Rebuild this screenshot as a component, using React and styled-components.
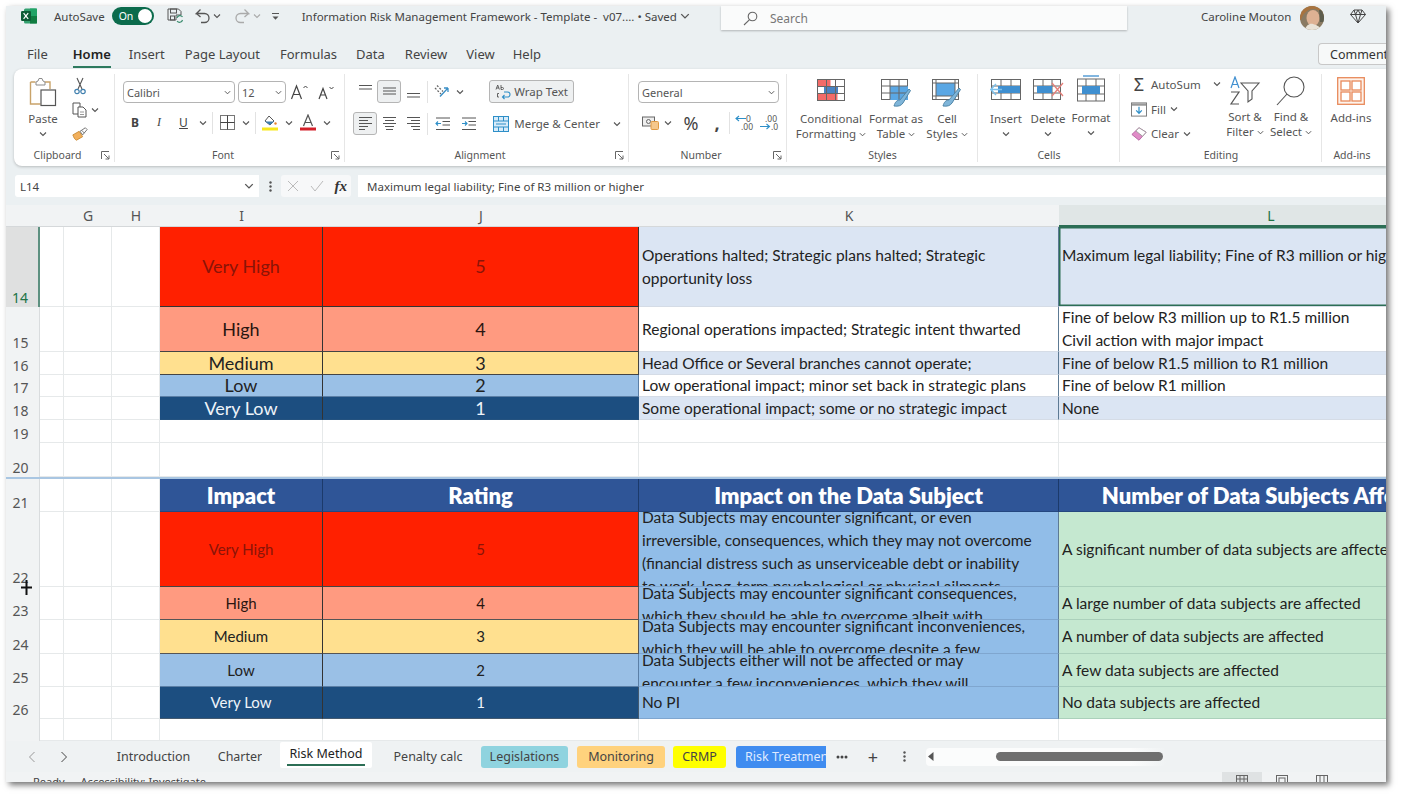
import styled, { createGlobalStyle } from "styled-components";

const GlobalStyle = createGlobalStyle`
  html, body {
    margin: 0;
    padding: 0;
    background: #ffffff;
    overflow: hidden;
  }
  * { box-sizing: border-box; }
`;

const uiFont = `"Noto Sans", "Open Sans", sans-serif`;
const cellFont = `Lato, "Open Sans", sans-serif`;

const Page = styled.div`
  width: 1404px;
  height: 801px;
  padding: 6px 18px 19px 6px;
`;

const Window = styled.div`
  width: 1380px;
  height: 776px;
  background: #ebf0f2;
  box-shadow: 3px 3px 6px rgba(0, 0, 0, 0.55);
  overflow: hidden;
  display: flex;
  flex-direction: column;
  font-family: ${uiFont};
  color: #444;
`;

/* title bar */
const TitleBar = styled.div`
  height: 29px;
  display: flex;
  align-items: flex-start;
  flex-shrink: 0;
`;

const TitleItem = styled.div`
  display: flex;
  align-items: center;
  height: 20px;
  margin-left: ${(p) => p.$ml || 0}px;
  font-size: ${(p) => p.$size || 11.5}px;
  white-space: nowrap;
`;

const Toggle = styled.div`
  width: 42px;
  height: 18px;
  border-radius: 9px;
  background: #0b6b4c;
  color: #fff;
  font-size: 10.5px;
  display: flex;
  align-items: center;
  justify-content: space-between;
  padding: 0 2px 0 7px;
  &::after {
    content: "";
    width: 14px;
    height: 14px;
    border-radius: 50%;
    background: #fff;
  }
`;

const SearchBox = styled.div`
  width: 406px;
  height: 24px;
  margin-left: 31px;
  background: #fafbfb;
  box-shadow: 0 1px 2px rgba(0, 0, 0, 0.25);
  display: flex;
  align-items: center;
  padding-left: 22px;
  gap: 12px;
  font-size: 12px;
  color: #777;
`;

/* menu tabs */
const MenuBar = styled.div`
  height: 34px;
  display: flex;
  flex-shrink: 0;
  padding-left: 21px;
`;

const MenuTab = styled.div`
  margin-right: ${(p) => p.$mr}px;
  height: 25px;
  margin-top: 8px;
  font-size: 13px;
  line-height: 22px;
  color: ${(p) => (p.$active ? "#222" : "#444")};
  font-weight: ${(p) => (p.$active ? 600 : 400)};
  border-bottom: ${(p) => (p.$active ? "2.5px solid #2d7a5f" : "none")};
  white-space: nowrap;
`;

const CommentsButton = styled.div`
  margin-left: auto;
  margin-top: 8px;
  width: 68px;
  height: 22px;
  flex-shrink: 0;
  background: #f7f9f9;
  border: 1px solid #c8c8c8;
  border-right: none;
  border-radius: 4px 0 0 4px;
  display: flex;
  align-items: center;
  padding-left: 8px;
  gap: 3px;
  font-size: 12.5px;
  overflow: hidden;
  color: #333;
`;

/* ribbon */
const Ribbon = styled.div`
  height: 97px;
  margin-left: 8px;
  background: #fff;
  border-radius: 8px 0 0 8px;
  box-shadow: 0 1px 3px rgba(0, 0, 0, 0.22);
  display: flex;
  flex-shrink: 0;
`;

const Group = styled.div`
  width: ${(p) => p.$w}px;
  flex-shrink: 0;
  display: flex;
  flex-direction: column;
  position: relative;
  &::after {
    content: "";
    position: absolute;
    right: 0;
    top: 5px;
    bottom: 4px;
    width: 1px;
    background: ${(p) => (p.$noLine ? "transparent" : "#e6e6e6")};
  }
`;

const GroupBody = styled.div`
  height: 77px;
  display: flex;
  padding-left: ${(p) => p.$pl || 0}px;
  padding-top: ${(p) => p.$pt ?? 0}px;
`;

const GroupFooter = styled.div`
  height: 20px;
  display: flex;
  align-items: center;
  font-size: 10.5px;
  color: #555;
  padding-bottom: 2px;
`;

const FooterLabel = styled.div`
  flex: 1;
  text-align: center;
  white-space: nowrap;
`;

const Launcher = styled.div`
  width: 14px;
  display: flex;
  justify-content: flex-start;
`;

const Stack = styled.div`
  display: flex;
  flex-direction: column;
  width: ${(p) => (p.$w ? `${p.$w}px` : "auto")};
`;

const ToolRow = styled.div`
  display: flex;
  align-items: center;
  height: ${(p) => p.$h || 24}px;
  margin-top: ${(p) => p.$mt || 0}px;
  margin-left: ${(p) => p.$ml || 0}px;
`;

const Slot = styled.div`
  width: ${(p) => p.$w || 24}px;
  height: 23px;
  flex-shrink: 0;
  display: flex;
  align-items: center;
  justify-content: center;
  font-size: ${(p) => p.$size || 12}px;
  font-weight: ${(p) => p.$weight || 400};
  font-style: ${(p) => p.$italic ? "italic" : "normal"};
  font-family: ${(p) => p.$serif ? `"Liberation Serif", serif` : "inherit"};
  text-decoration: ${(p) => p.$under ? "underline" : "none"};
  color: #444;
  border-radius: 3px;
  background: ${(p) => (p.$on ? "#eef0f1" : "transparent")};
  border: ${(p) => (p.$on ? "1px solid #b5b5b5" : "none")};
`;

const VLine = styled.div`
  width: 1px;
  height: 22px;
  background: #e2e2e2;
  margin: 0 ${(p) => p.$m ?? 2}px;
  flex-shrink: 0;
`;

const SelectBox = styled.div`
  width: ${(p) => p.$w}px;
  height: 22px;
  border: 1px solid #b4b4b4;
  border-radius: 4px;
  display: flex;
  align-items: center;
  justify-content: space-between;
  padding: 0 3px;
  font-size: 11px;
  color: #555;
  flex-shrink: 0;
  margin-right: ${(p) => p.$mr || 0}px;
`;

const WrapButton = styled.div`
  width: 85px;
  height: 23px;
  background: #eef0f1;
  border: 1px solid #b5b5b5;
  border-radius: 3px;
  display: flex;
  align-items: center;
  padding-left: 5px;
  gap: 3px;
  font-size: 11.5px;
  color: #555;
  white-space: nowrap;
`;

const SmallAction = styled.div`
  display: flex;
  align-items: center;
  gap: ${(p) => p.$gap ?? 4}px;
  height: 25px;
  font-size: 11.5px;
  color: #555;
  white-space: nowrap;
`;

const LargeButton = styled.div`
  width: ${(p) => p.$w}px;
  flex-shrink: 0;
  display: flex;
  flex-direction: column;
  align-items: center;
  padding-top: ${(p) => p.$pt ?? 8}px;
  font-size: 11.5px;
  line-height: 15.5px;
  color: #555;
  text-align: center;
  white-space: nowrap;
`;

const IconBox = styled.div`
  height: ${(p) => p.$h || 32}px;
  display: flex;
  align-items: flex-start;
  justify-content: center;
`;

const ChevLine = styled.div`
  height: 15px;
  display: flex;
  align-items: center;
  justify-content: center;
  gap: 3px;
`;

/* formula bar */
const FormulaBar = styled.div`
  height: 22px;
  margin: 9px 0 0 9px;
  display: flex;
  align-items: stretch;
  flex-shrink: 0;
`;

const NameBox = styled.div`
  width: 244px;
  background: #fff;
  border-radius: 3px 0 0 3px;
  display: flex;
  align-items: center;
  justify-content: space-between;
  padding: 0 5px;
  font-size: 11.5px;
  color: #444;
`;

const Kebab = styled.div`
  width: 22px;
  display: flex;
  align-items: center;
  justify-content: center;
`;

const FxBox = styled.div`
  width: 70px;
  background: #f7f8f9;
  border-radius: 3px;
  display: flex;
  align-items: center;
  justify-content: space-between;
  padding: 0 4px 0 6px;
  margin-right: 7px;
`;

const FxLabel = styled.span`
  font-family: "Liberation Serif", serif;
  font-style: italic;
  font-weight: 700;
  font-size: 15px;
  color: #333;
`;

const FormulaInput = styled.div`
  flex: 1;
  background: #fff;
  display: flex;
  align-items: center;
  padding-left: 9px;
  font-size: 11.5px;
  color: #444;
`;

/* sheet */
const Sheet = styled.div`
  margin-top: 8px;
  height: 536px;
  flex-shrink: 0;
  overflow: hidden;
  position: relative;
  background: #fff;
`;

const columns = "34px 24px 48px 48px 163px 316px 420px 424px";

const SheetRow = styled.div`
  display: grid;
  grid-template-columns: ${columns};
  height: ${(p) => p.$h}px;
  width: 1477px;
  border-top: ${(p) => (p.$topRule ? "2px solid #a9c6e2" : "none")};
`;

const ColHead = styled.div`
  background: ${(p) => (p.$selected ? "#e0e6e6" : "#f1f3f4")};
  color: ${(p) => (p.$selected ? "#217346" : "#555")};
  border-bottom: ${(p) => (p.$selected ? "2px solid #2c6e55" : "1px solid #d5d8da")};
  font-size: 14px;
  display: flex;
  align-items: center;
  justify-content: center;
`;

const RowHead = styled.div`
  position: relative;
  background: ${(p) => (p.$selected ? "#dfe0e0" : "#f1f3f4")};
  color: ${(p) => (p.$selected ? "#217346" : "#555")};
  border-right: ${(p) => (p.$selected ? "2px solid #5d9080" : "1px solid #d9dcde")};
  font-size: 14px;
  line-height: 18px;
  display: flex;
  align-items: flex-end;
  justify-content: center;
  padding-right: 4px;
`;

const ResizeCursor = styled.svg`
  position: absolute;
  left: 14px;
  bottom: -9px;
  z-index: 3;
`;

const Cell = styled.div`
  background: ${(p) => p.$bg || "#fff"};
  color: ${(p) => p.$color || "#222"};
  font-family: ${cellFont};
  font-size: ${(p) => p.$size || 15}px;
  font-weight: ${(p) => (p.$bold ? 800 : 400)};
  line-height: 23px;
  border-right: 1px solid ${(p) => p.$right || "#e6e9ea"};
  border-bottom: 1px solid ${(p) => p.$bottom || "#e6e9ea"};
  overflow: hidden;
  white-space: nowrap;
  display: flex;
  align-items: ${(p) => (p.$top ? "flex-start" : "center")};
  justify-content: ${(p) => (p.$center ? "center" : "flex-start")};
  padding-left: ${(p) => (p.$center ? 0 : 3)}px;
  box-shadow: ${(p) => (p.$selected ? "inset 0 0 0 1.5px #2c6e55" : "none")};
`;

const ClippedText = styled.div`
  margin-top: ${(p) => p.$shift || 0}px;
`;

/* sheet tabs */
const TabsBar = styled.div`
  height: 31px;
  flex-shrink: 0;
  background: #eff2f3;
  display: flex;
  align-items: center;
  padding-left: 22px;
  font-size: 12.5px;
`;

const NavSlot = styled.div`
  width: ${(p) => p.$w}px;
  display: flex;
  justify-content: flex-start;
  flex-shrink: 0;
  color: ${(p) => p.$color || "#555"};
`;

const SheetTab = styled.div`
  width: ${(p) => p.$w}px;
  margin-right: ${(p) => p.$mr || 0}px;
  height: ${(p) => (p.$active ? 26 : 22)}px;
  background: ${(p) => p.$bg || "transparent"};
  color: ${(p) => p.$color || "#444"};
  border-radius: ${(p) => p.$radius ?? 3}px;
  display: flex;
  align-items: center;
  justify-content: center;
  white-space: nowrap;
  overflow: hidden;
  flex-shrink: 0;
  position: relative;
  margin-top: ${(p) => (p.$active ? -4 : 0)}px;
  &::after {
    content: "";
    display: ${(p) => (p.$active ? "block" : "none")};
    position: absolute;
    left: 7px;
    right: 7px;
    bottom: 2px;
    height: 2px;
    background: #2c6e55;
  }
`;

const TabText = styled.span`
  padding-bottom: ${(p) => (p.$active ? 3 : 0)}px;
  color: inherit;
`;

const TabTool = styled.div`
  width: ${(p) => p.$w}px;
  flex-shrink: 0;
  display: flex;
  align-items: center;
  justify-content: center;
  font-size: 18px;
  color: #444;
`;

const ScrollTrack = styled.div`
  width: 240px;
  height: 18px;
  margin-left: 6px;
  flex-shrink: 0;
  background: linear-gradient(90deg, #fbfcfc 85%, #eff2f3);
  border-radius: 4px;
  display: flex;
  align-items: center;
  padding-left: 2px;
`;

const ScrollThumb = styled.div`
  width: 167px;
  height: 9px;
  margin-left: 62px;
  background: #6f6f6f;
  border-radius: 5px;
  flex-shrink: 0;
`;

const StatusBar = styled.div`
  height: 10px;
  flex: 1;
  display: flex;
  overflow: hidden;
  padding-left: 27px;
  font-size: 11px;
  line-height: 20px;
  color: #444;
  gap: 16px;
  white-space: nowrap;
  background: #f1f3f4;
`;

const StatusViews = styled.div`
  margin-left: auto;
  display: flex;
  margin-right: 44px;
`;

const ViewButton = styled.div`
  width: 40px;
  height: 10px;
  padding-top: 3px;
  display: flex;
  justify-content: center;
  background: ${(p) => (p.$on ? "#dfe2e3" : "transparent")};
`;

/* icons */
const Chev = ({ s = 8, c = "#555" }) => (
  <svg width={s} height={s} viewBox="0 0 8 8" fill="none">
    <path d="M1 2.5 4 5.5 7 2.5" stroke={c} strokeWidth="1.1" />
  </svg>
);

const ExcelLogo = () => (
  <svg width="16" height="16" viewBox="0 0 16 16">
    <rect x="3" y="0.5" width="13" height="15" rx="1.5" fill="#33a06f" />
    <rect x="9" y="0.5" width="7" height="7.5" fill="#21a366" />
    <rect x="9" y="8" width="7" height="7.5" fill="#107c41" />
    <rect x="0" y="3" width="10" height="10" rx="1.2" fill="#0e5c36" />
    <path d="M2.6 5.2 7.2 10.8M7.2 5.2 2.6 10.8" stroke="#fff" strokeWidth="1.2" />
  </svg>
);

const SaveIcon = () => (
  <svg width="17" height="16" viewBox="0 0 17 16" fill="none" stroke="#555">
    <path d="M1 1h10.5L14 3.5V7H9v5H1z" />
    <rect x="3.5" y="1" width="6" height="4" />
    <rect x="3.5" y="8" width="4" height="4" />
    <path d="M10 10a3 3 0 0 1 5.5-1M15.5 12a3 3 0 0 1-5.4 1" stroke="#3a8c6e" strokeWidth="1.2" />
  </svg>
);

const UndoIcon = ({ c = "#555", flip }) => (
  <svg width="16" height="16" viewBox="0 0 16 16" fill="none" stroke={c} strokeWidth="1.3" style={flip ? { transform: "scaleX(-1)" } : undefined}>
    <path d="M5.5 1.5 1.5 5.5h8a4.2 4.2 0 0 1 0 9H6" />
    <path d="M1.5 5.5 5.5 9" />
  </svg>
);

const QuickIcon = () => (
  <svg width="9" height="9" viewBox="0 0 9 9" fill="none" stroke="#555">
    <path d="M1 1.5h7" />
    <path d="M1.5 4.5h6L4.5 7.8z" fill="#555" stroke="none" />
  </svg>
);

const SearchIcon = () => (
  <svg width="15" height="15" viewBox="0 0 15 15" fill="none" stroke="#666" strokeWidth="1.1">
    <circle cx="9.5" cy="5.5" r="4.3" />
    <path d="M6.3 8.8 1 14" />
  </svg>
);

const Avatar = () => (
  <svg width="24" height="24" viewBox="0 0 24 24">
    <defs>
      <clipPath id="face"><circle cx="12" cy="12" r="12" /></clipPath>
    </defs>
    <g clipPath="url(#face)">
      <rect width="24" height="24" fill="#8a7a62" />
      <path d="M0 0h24v10c-3-5-6-7-11-7S3 7 1 14L0 14z" fill="#a8733f" />
      <ellipse cx="13" cy="12" rx="6.5" ry="8" fill="#ddb193" />
      <path d="M5 24c1-5 5-7 8-6s7 2 8 6z" fill="#e9e3d8" />
      <path d="M19 4h5v12h-4z" fill="#5d5d4d" />
    </g>
  </svg>
);

const Diamond = () => (
  <svg width="16" height="15" viewBox="0 0 16 15" fill="none" stroke="#444" strokeWidth="1">
    <path d="M4 1h8l3.5 4.5L8 14 .5 5.5zM.5 5.5h15M5.5 5.5 8 14l2.5-8.500M4 1l1.500 4.500L8 1l2.500 4.500L12 1" />
  </svg>
);

const CommentIcon = () => (
  <svg width="13" height="12" viewBox="0 0 13 12" fill="none" stroke="#444">
    <path d="M1 1h11v7.500H5L2.500 11V8.500H1z" />
  </svg>
);

const PasteIcon = () => (
  <svg width="30" height="30" viewBox="0 0 30 30" fill="none">
    <path d="M2.500 5h5M17 5h5v7" stroke="#c9a36a" strokeWidth="1.400" />
    <path d="M2.500 5v22h10" stroke="#c9a36a" strokeWidth="1.400" />
    <path d="M8 5l2-1 1-2.500h3L15 4l2 1v3H8z" fill="#fff" stroke="#8b8b8b" />
    <rect x="13" y="13" width="14.500" height="15.500" fill="#fff" stroke="#555" strokeWidth="1.200" />
  </svg>
);

const CutIcon = () => (
  <svg width="14" height="18" viewBox="0 0 14 18" fill="none">
    <path d="M4 1 9 12M10 1 5 12" stroke="#555" strokeWidth="1.100" />
    <circle cx="4" cy="14.500" r="2.200" stroke="#3f7fae" strokeWidth="1.200" />
    <circle cx="10" cy="14.500" r="2.200" stroke="#3f7fae" strokeWidth="1.200" />
  </svg>
);

const CopyIcon = () => (
  <svg width="16" height="16" viewBox="0 0 16 16" fill="none" stroke="#555">
    <path d="M1 1h7v11H1z" />
    <path d="M6 5h5l3 3v7H6z" fill="#fff" />
    <path d="M8 10h4M8 12.500h4" stroke="#999" />
  </svg>
);

const PainterIcon = () => (
  <svg width="18" height="16" viewBox="0 0 18 16" fill="none">
    <path d="M1 9l7-4 4 6-7 4c-2-1-3-3-4-6z" fill="#f2b05c" stroke="#c98a33" />
    <path d="M9 5l6-4 2 2-5 6z" fill="#fff" stroke="#666" />
    <path d="M11 4l3 3" stroke="#666" />
  </svg>
);

const Launch = () => (
  <svg width="9" height="9" viewBox="0 0 9 9" fill="none" stroke="#666">
    <path d="M.5 8V.5H8" />
    <path d="M3 3l5 5M8 4.500V8H4.500" />
  </svg>
);

const GrowA = ({ up }) => (
  <svg width="20" height="16" viewBox="0 0 20 16" fill="none" stroke="#444">
    <path d={up ? "M1.500 15 6.500 2l5 13M3.500 10.500h6" : "M3 15 7 4.500l4 10.500M4.500 11h5"} strokeWidth="1.200" />
    <path d={up ? "M13.500 4 15.500 2l2 2" : "M13.500 3 15.500 5l2-2"} />
  </svg>
);

const BordersIcon = () => (
  <svg width="15" height="15" viewBox="0 0 15 15" fill="none" stroke="#777">
    <rect x=".5" y=".5" width="14" height="14" />
    <path d="M7.500 .5v14M.5 7.500h14" stroke="#444" />
  </svg>
);

const FillIcon = () => (
  <svg width="16" height="17" viewBox="0 0 16 17" fill="none">
    <path d="M3 7l4-5 5 5-4 4z" stroke="#555" fill="#fff" />
    <path d="M3 7.500h9L8 11z" fill="#3f7fae" />
    <circle cx="13.500" cy="9.500" r="1.200" fill="#e8842c" />
    <rect y="13.500" width="16" height="3" fill="#f7e81a" />
  </svg>
);

const FontColorIcon = () => (
  <svg width="16" height="17" viewBox="0 0 16 17" fill="none">
    <path d="M3.500 12 8 1l4.500 11M5 8.500h6" stroke="#555" strokeWidth="1.200" />
    <rect y="13.500" width="16" height="3" fill="#d3202a" />
  </svg>
);

const Lines = ({ v }) => {
  const rows = {
    top: ["M2 2.500h13", "M2 6h13", ""],
    middle: ["M2 5h13", "M2 8h13", "M2 11h13"],
    bottom: ["", "M2 10.500h13", "M2 14h13"],
    left: ["M2 2.500h13", "M2 5.500h9", "M2 8.500h13", "M2 11.500h9", "M2 14.500h6"],
    center: ["M2 2.500h13", "M4 5.500h9", "M2 8.500h13", "M4 11.500h9", "M5 14.500h7"],
    right: ["M2 2.500h13", "M6 5.500h9", "M2 8.500h13", "M6 11.500h9", "M8 14.500h7"],
  }[v];
  return (
    <svg width="17" height="17" viewBox="0 0 17 17" fill="none" stroke="#555">
      <path d={rows.join(" ")} />
    </svg>
  );
};

const OrientIcon = () => (
  <svg width="16" height="15" viewBox="0 0 16 15" fill="none">
    <path d="M1 4l6 6M3 1.500l6 6" stroke="#666" strokeWidth="1.300" strokeDasharray="2 1.500" />
    <path d="M6 12.500 14 4M14 4h-4M14 4v4" stroke="#3a8fc6" strokeWidth="1.300" />
  </svg>
);

const IndentIcon = ({ out }) => (
  <svg width="16" height="14" viewBox="0 0 16 14" fill="none">
    <path d="M1 1h14M7.500 4.500H15M7.500 8h7.500M1 12.500h14" stroke="#555" />
    <path d={out ? "M6 6.500H1M3 4.500l-2 2 2 2" : "M1 6.500h5M4 4.500l2 2-2 2"} stroke="#2e8fc8" strokeWidth="1.100" />
  </svg>
);

const WrapIcon = () => (
  <svg width="16" height="16" viewBox="0 0 16 16" fill="none">
    <path d="M9 8h3.500a2.300 2.300 0 0 1 0 5H8M9.500 11 7.500 13l2 2" stroke="#2e8fc8" strokeWidth="1.100" />
    <path d="M1 5.500 2.700 1l1.700 4.500M1.600 4h2.200M6 1v4.500M6 3.500h1.500a1 1 0 0 1 0 2H6M4 9.500H2.500V13H4" stroke="#555" strokeWidth=".9" />
  </svg>
);

const MergeIcon = () => (
  <svg width="16" height="16" viewBox="0 0 16 16" fill="none">
    <rect x=".5" y=".5" width="15" height="15" fill="#d8ecfa" stroke="#2e8fc8" />
    <path d="M.5 5h15M.5 11h15M5.500 .5V5M10.500 .5V5M5.500 11v4.500M10.500 11v4.500M3 8h10" stroke="#2e8fc8" />
  </svg>
);

const AccountingIcon = () => (
  <svg width="17" height="15" viewBox="0 0 17 15" fill="none">
    <rect x=".5" y="2" width="12" height="9" fill="#eee" stroke="#666" />
    <circle cx="6.500" cy="6.500" r="2" stroke="#666" />
    <rect x="9" y="6.500" width="7.500" height="8" rx="1" fill="#f5c78c" stroke="#e09a44" />
  </svg>
);

const DecimalIcon = ({ more }) => (
  <svg width="20" height="17" viewBox="0 0 20 17" fill="none">
    {more ? (
      <>
        <path d="M19 4.500H9M12 2 9 4.500 12 7" stroke="#2e8fc8" strokeWidth="1.100" transform="translate(-8 0)" />
        <text x="11" y="7.500" fontSize="8.500" fill="#555" fontFamily="Noto Sans">0</text>
        <text x="6" y="16" fontSize="8.500" fill="#555" fontFamily="Noto Sans">.00</text>
      </>
    ) : (
      <>
        <text x="6" y="7.500" fontSize="8.500" fill="#555" fontFamily="Noto Sans">.00</text>
        <path d="M1 12.500h9M7.500 10l3 2.500-3 2.500" stroke="#2e8fc8" strokeWidth="1.100" />
        <text x="12" y="16" fontSize="8.500" fill="#555" fontFamily="Noto Sans">.0</text>
      </>
    )}
  </svg>
);

const GridBase = ({ children, w = 28, h = 22 }) => (
  <svg width={w} height={h + 6} viewBox={`0 0 ${w} ${h + 6}`} fill="none">
    {children}
  </svg>
);

const CondFormatIcon = () => (
  <GridBase>
    <rect x=".5" y=".5" width="27" height="21" fill="#fff" stroke="#666" />
    <path d="M.5 .5h13v7h-13zM.5 14h20v7.500H.5z" fill="#f36b68" />
    <path d="M7 7.500h14V14H7z" fill="#4a83c2" />
    <path d="M9.500 .5v21M18.500 .5v21M.5 7.500h27M.5 14.500h27" stroke="#666" />
    <rect x=".5" y=".5" width="27" height="21" stroke="#666" />
  </GridBase>
);

const TableIcon = () => (
  <svg width="30" height="28" viewBox="0 0 30 28" fill="none">
    <rect x=".5" y=".5" width="26" height="20" fill="#fff" stroke="#666" />
    <path d="M9 7h18v14H9z" fill="#5aa7e4" />
    <path d="M9 .5v20M18 .5v20M.5 7h26M.5 14h26" stroke="#666" />
    <path d="M13 27c1-4 3-6 6-6l9-11 1.500 1.500L22 24c-2 3-5 3.500-9 3z" fill="#7fb5d9" stroke="#4f86a8" />
  </svg>
);

const CellStylesIcon = () => (
  <svg width="30" height="28" viewBox="0 0 30 28" fill="none">
    <rect x=".5" y=".5" width="26" height="20" fill="#fff" stroke="#666" />
    <rect x="4" y="4" width="19" height="13" fill="#5aa7e4" />
    <path d="M.5 4h26M.5 17h26M4 .5v20M23 .5v20" stroke="#666" />
    <path d="M11 27c1-4 3-6 6-6l10-12 1.500 1.500L20 24c-2 3-5 3.500-9 3z" fill="#7fb5d9" stroke="#4f86a8" />
  </svg>
);

const InsertCellsIcon = () => (
  <svg width="32" height="24" viewBox="0 0 32 24" fill="none">
    <rect x="1.500" y="1.500" width="29" height="20" fill="#fff" stroke="#666" />
    <path d="M11 1.500v20M21 1.500v20M1.500 8h29M1.500 15h29" stroke="#666" />
    <rect x="8" y="8" width="22" height="7" fill="#3f8fd0" />
    <path d="M12 11.500H1M6 6 .8 11.500 6 17" stroke="#7cc0ea" strokeWidth="1.500" />
  </svg>
);

const DeleteCellsIcon = () => (
  <svg width="32" height="24" viewBox="0 0 32 24" fill="none">
    <rect x="1.500" y="1.500" width="27" height="20" fill="#fff" stroke="#666" />
    <path d="M11 1.500v20M20 1.500v20M1.500 8h27M1.500 15h27" stroke="#666" />
    <rect x="5" y="8" width="15" height="7" fill="#3f8fd0" />
    <path d="M20 5l11 13M31 5 20 18" stroke="#e4807a" strokeWidth="1.300" />
  </svg>
);

const FormatCellsIcon = () => (
  <svg width="28" height="27" viewBox="0 0 28 27" fill="none">
    <path d="M6 1h16" stroke="#3f8fd0" strokeWidth="1.300" />
    <rect x=".5" y="4" width="27" height="22" fill="#fff" stroke="#666" />
    <path d="M9 4v22M19 4v22M.5 11h27M.5 19h27" stroke="#666" />
    <rect x="9" y="11" width="10" height="8" fill="#3f8fd0" />
    <rect x="5" y="11" width="18" height="8" fill="#3f8fd0" />
  </svg>
);

const FillDownIcon = () => (
  <svg width="17" height="15" viewBox="0 0 17 15" fill="none">
    <rect x=".5" y=".5" width="16" height="14" fill="#fff" stroke="#777" />
    <rect x="1" y="1" width="15" height="2.500" fill="#999" />
    <path d="M8.500 4.500V11M5.500 8.500l3 3 3-3" stroke="#2e8fc8" strokeWidth="1.300" />
  </svg>
);

const EraserIcon = () => (
  <svg width="18" height="16" viewBox="0 0 18 16" fill="none">
    <path d="M1 8.500 9 1l8 5-8 9z" fill="#e08cc7" stroke="#b562a0" />
    <path d="M9 1l8 5-4 4.500L5.500 4.500z" fill="#fff" stroke="#999" />
  </svg>
);

const SortIcon = () => (
  <svg width="32" height="30" viewBox="0 0 32 30" fill="none">
    <path d="M2 12 6 1l4 11M3.500 8.500h5" stroke="#3f8fd0" strokeWidth="1.200" />
    <path d="M2 16h8L2 28h8" stroke="#555" strokeWidth="1.200" />
    <path d="M12 7h18l-7 8v8l-4 3V15z" fill="#fff" stroke="#555" strokeWidth="1.100" />
  </svg>
);

const FindIcon = () => (
  <svg width="30" height="30" viewBox="0 0 30 30" fill="none" stroke="#555" strokeWidth="1.100">
    <circle cx="18" cy="11" r="10" />
    <path d="M11 18 1 29" />
  </svg>
);

const AddInsIcon = () => (
  <svg width="28" height="28" viewBox="0 0 28 28" fill="none" stroke="#e8895a" strokeWidth="1.300">
    <rect x=".7" y=".7" width="26.600" height="26.600" fill="#fdf3ec" />
    <rect x="4" y="4" width="9" height="9" fill="#fff" />
    <rect x="15" y="4" width="9" height="9" fill="#fff" />
    <rect x="4" y="15" width="9" height="9" fill="#fff" />
    <rect x="15" y="15" width="9" height="9" fill="#fff" />
  </svg>
);

const ViewGlyph = ({ kind }) => (
  <svg width="12" height="12" viewBox="0 0 12 12" fill="none" stroke="#666">
    <rect x=".5" y=".5" width="11" height="11" />
    {kind === "normal" && <path d="M4 .5v11M8 .5v11M.5 4h11" />}
    {kind === "page" && <rect x="3" y="3" width="6" height="6" />}
    {kind === "break" && <path d="M4 .5v11M8 .5v11" />}
  </svg>
);

/* sheet data */
const RED = "#ff2000";
const SALMON = "#ff9a80";
const YELLOW = "#ffe08f";
const LOW = "#9ac0e6";
const NAVY = "#1c4e80";
const HEAD = "#2f5597";
const PALE = "#dbe5f3";
const KBLUE = "#91bde8";
const GREEN = "#c5e8d0";

const ratingRows = [
  {
    n: 14, h: 80, i: "Very High", j: "5", bg: RED, color: "#8a1408", size: 18,
    k: ["Operations halted; Strategic plans halted; Strategic", "opportunity loss"],
    l: ["Maximum legal liability; Fine of R3 million or higher"], kBg: PALE, lBg: PALE, line: "#333", selected: true,
  },
  {
    n: 15, h: 45, i: "High", j: "4", bg: SALMON, color: "#2a1510", size: 18,
    k: ["Regional operations impacted; Strategic intent thwarted"],
    l: ["Fine of below R3 million up to R1.5 million", "Civil action with major impact"], kBg: "#fff", lBg: "#fff", line: "#444",
  },
  {
    n: 16, h: 23, i: "Medium", j: "3", bg: YELLOW, color: "#222", size: 18,
    k: ["Head Office or Several branches cannot operate;"],
    l: ["Fine of below R1.5 million to R1 million"], kBg: PALE, lBg: PALE, line: "#444",
  },
  {
    n: 17, h: 22, i: "Low", j: "2", bg: LOW, color: "#222", size: 18,
    k: ["Low operational impact; minor set back in strategic plans"],
    l: ["Fine of below R1 million"], kBg: "#fff", lBg: "#fff", line: "#5b7fa6",
  },
  {
    n: 18, h: 23, i: "Very Low", j: "1", bg: NAVY, color: "#eef4fa", size: 18,
    k: ["Some operational impact; some or no strategic impact"],
    l: ["None"], kBg: PALE, lBg: PALE, line: "#24527f",
  },
];

const subjectRows = [
  {
    n: 22, h: 75, i: "Very High", j: "5", bg: RED, color: "#8a1408", size: 15, shift: -6, cursor: true,
    k: ["Data Subjects may encounter significant, or even", "irreversible, consequences, which they may not overcome", "(financial distress such as unserviceable debt or inability", "to work, long-term psychological or physical ailments"],
    l: ["A significant number of data subjects are affected"], line: "#444",
  },
  {
    n: 23, h: 33, i: "High", j: "4", bg: SALMON, color: "#2a1510", size: 15, shift: -5,
    k: ["Data Subjects may encounter significant consequences,", "which they should be able to overcome albeit with"],
    l: ["A large number of data subjects are affected"], line: "#555",
  },
  {
    n: 24, h: 34, i: "Medium", j: "3", bg: YELLOW, color: "#222", size: 15, shift: -5,
    k: ["Data Subjects may encounter significant inconveniences,", "which they will be able to overcome despite a few"],
    l: ["A number of data subjects are affected"], line: "#555",
  },
  {
    n: 25, h: 33, i: "Low", j: "2", bg: LOW, color: "#222", size: 15, shift: -5,
    k: ["Data Subjects either will not be affected or may", "encounter a few inconveniences, which they will"],
    l: ["A few data subjects are affected"], line: "#5b7fa6",
  },
  {
    n: 26, h: 32, i: "Very Low", j: "1", bg: NAVY, color: "#eef4fa", size: 15,
    k: ["No PI"], l: ["No data subjects are affected"], line: "#445a70",
  },
];

const BlankCells = ({ bottom }) => (
  <>
    <Cell $bottom={bottom} />
    <Cell $bottom={bottom} />
    <Cell $bottom={bottom} />
  </>
);

const DataRow = ({ row, second }) => (
  <SheetRow $h={row.h}>
    <RowHead $selected={row.selected}>
      {row.n}
      {row.cursor && (
        <ResizeCursor width="13" height="17" viewBox="0 0 13 17">
          <path d="M6.500 1v15M1 8.500h11" stroke="#111" strokeWidth="2" />
        </ResizeCursor>
      )}
    </RowHead>
    <BlankCells />
    <Cell $bg={row.bg} $color={row.color} $size={row.size} $center $right="#333" $bottom={row.line}>{row.i}</Cell>
    <Cell $bg={row.bg} $color={row.color} $size={row.size} $center $right={row.line} $bottom={row.line}>{row.j}</Cell>
    <Cell $bg={second ? KBLUE : row.kBg} $top={row.shift !== undefined} $bottom={second ? "#7fa6cf" : "#d5dce6"} $right="#5d7a94" $size={second ? 15.5 : 15.5}>
      <ClippedText $shift={row.shift}>
        {row.k.map((t) => <div key={t}>{t}</div>)}
      </ClippedText>
    </Cell>
    <Cell $bg={second ? GREEN : row.lBg} $bottom={second ? "#abd0bb" : "#d5dce6"} $right="transparent" $selected={row.selected} $top={row.selected} $size={15.5}>
      <ClippedText $shift={row.selected ? 17 : 0}>
        {row.l.map((t) => <div key={t}>{t}</div>)}
      </ClippedText>
    </Cell>
  </SheetRow>
);

const EmptyRow = ({ n, h }) => (
  <SheetRow $h={h}>
    <RowHead>{n}</RowHead>
    <BlankCells />
    <Cell /><Cell /><Cell /><Cell />
  </SheetRow>
);

const Header = ({ children, w }) => <Cell $bg={HEAD} $color="#fff" $size={22} $bold $center $right="#1c3a6b" $bottom="#24477f">{children}</Cell>;

export default function App() {
  return (
    <Page>
      <GlobalStyle />
      <Window>
        <TitleBar>
          <TitleItem $ml={15}><ExcelLogo /></TitleItem>
          <TitleItem $ml={17}>AutoSave</TitleItem>
          <TitleItem $ml={7}><Toggle>On</Toggle></TitleItem>
          <TitleItem $ml={13}><SaveIcon /></TitleItem>
          <TitleItem $ml={11}><UndoIcon /></TitleItem>
          <TitleItem $ml={2}><Chev /></TitleItem>
          <TitleItem $ml={13}><UndoIcon c="#aaa" flip /></TitleItem>
          <TitleItem $ml={3}><Chev c="#aaa" /></TitleItem>
          <TitleItem $ml={10}><QuickIcon /></TitleItem>
          <TitleItem $ml={22}>Information Risk Management Framework - Template -&nbsp; v07.... • Saved&nbsp;<Chev s={10} /></TitleItem>
          <SearchBox><SearchIcon />Search</SearchBox>
          <TitleItem $ml={74}>Caroline Mouton</TitleItem>
          <TitleItem $ml={9} style={{ height: 24 }}><Avatar /></TitleItem>
          <TitleItem $ml={26}><Diamond /></TitleItem>
        </TitleBar>

        <MenuBar>
          <MenuTab $mr={25}>File</MenuTab>
          <MenuTab $mr={18} $active>Home</MenuTab>
          <MenuTab $mr={20}>Insert</MenuTab>
          <MenuTab $mr={20}>Page Layout</MenuTab>
          <MenuTab $mr={19}>Formulas</MenuTab>
          <MenuTab $mr={20}>Data</MenuTab>
          <MenuTab $mr={19}>Review</MenuTab>
          <MenuTab $mr={18}>View</MenuTab>
          <MenuTab $mr={0}>Help</MenuTab>
          <CommentsButton><CommentIcon />Comments</CommentsButton>
        </MenuBar>

        <Ribbon>
          <Group $w={101}>
            <GroupBody>
              <LargeButton $w={58} $pt={8}>
                <IconBox $h={34}><PasteIcon /></IconBox>
                Paste
                <ChevLine><Chev /></ChevLine>
              </LargeButton>
              <Stack>
                <ToolRow $h={23} $mt={5}><Slot $w={16}><CutIcon /></Slot></ToolRow>
                <ToolRow $h={25}><Slot $w={16}><CopyIcon /></Slot><Slot $w={14}><Chev /></Slot></ToolRow>
                <ToolRow $h={23}><Slot $w={16}><PainterIcon /></Slot></ToolRow>
              </Stack>
            </GroupBody>
            <GroupFooter><FooterLabel>Clipboard</FooterLabel><Launcher><Launch /></Launcher></GroupFooter>
          </Group>

          <Group $w={230}>
            <GroupBody $pl={8} $pt={12}>
              <Stack>
                <ToolRow $h={22}>
                  <SelectBox $w={112} $mr={3}>Calibri<Chev s={7} /></SelectBox>
                  <SelectBox $w={48}>12<Chev s={7} /></SelectBox>
                  <Slot $w={27}><GrowA up /></Slot>
                  <Slot $w={25}><GrowA /></Slot>
                </ToolRow>
                <ToolRow $h={23} $mt={8}>
                  <Slot $size={12} $weight={700}>B</Slot>
                  <Slot $size={12} $italic $serif>I</Slot>
                  <Slot $w={25} $size={12} $under>U</Slot>
                  <Slot $w={14}><Chev /></Slot>
                  <VLine $m={2} />
                  <Slot $w={24}><BordersIcon /></Slot>
                  <Slot $w={14}><Chev /></Slot>
                  <VLine $m={2} />
                  <Slot $w={24}><FillIcon /></Slot>
                  <Slot $w={14}><Chev /></Slot>
                  <Slot $w={24}><FontColorIcon /></Slot>
                  <Slot $w={14}><Chev /></Slot>
                </ToolRow>
              </Stack>
            </GroupBody>
            <GroupFooter><FooterLabel>Font</FooterLabel><Launcher><Launch /></Launcher></GroupFooter>
          </Group>

          <Group $w={284}>
            <GroupBody $pl={8} $pt={11}>
              <Stack $w={138}>
                <ToolRow $h={23}>
                  <Slot><Lines v="top" /></Slot>
                  <Slot $on><Lines v="middle" /></Slot>
                  <Slot><Lines v="bottom" /></Slot>
                  <VLine $m={2} />
                  <Slot><OrientIcon /></Slot>
                  <Slot $w={12}><Chev /></Slot>
                </ToolRow>
                <ToolRow $h={23} $mt={9}>
                  <Slot $on><Lines v="left" /></Slot>
                  <Slot><Lines v="center" /></Slot>
                  <Slot><Lines v="right" /></Slot>
                  <VLine $m={2} />
                  <Slot $w={26}><IndentIcon out /></Slot>
                  <Slot $w={26}><IndentIcon /></Slot>
                </ToolRow>
              </Stack>
              <Stack>
                <WrapButton><WrapIcon />Wrap Text</WrapButton>
                <SmallAction style={{ marginTop: 8, marginLeft: 4 }} $gap={5}>
                  <MergeIcon />Merge &amp; Center<Slot $w={24}><Chev /></Slot>
                </SmallAction>
              </Stack>
            </GroupBody>
            <GroupFooter><FooterLabel>Alignment</FooterLabel><Launcher><Launch /></Launcher></GroupFooter>
          </Group>

          <Group $w={158}>
            <GroupBody $pl={9} $pt={12}>
              <Stack>
                <ToolRow $h={22}><SelectBox $w={141}>General<Chev s={7} /></SelectBox></ToolRow>
                <ToolRow $h={23} $mt={8}>
                  <Slot $w={24}><AccountingIcon /></Slot>
                  <Slot $w={12}><Chev /></Slot>
                  <Slot $w={34} $size={18}>%</Slot>
                  <Slot $w={18} $size={18} $weight={700}>,</Slot>
                  <VLine $m={3} />
                  <Slot $w={24}><DecimalIcon more /></Slot>
                  <Slot $w={24}><DecimalIcon /></Slot>
                </ToolRow>
              </Stack>
            </GroupBody>
            <GroupFooter><FooterLabel>Number</FooterLabel><Launcher><Launch /></Launcher></GroupFooter>
          </Group>

          <Group $w={191}>
            <GroupBody $pl={9}>
              <LargeButton $w={70} $pt={10}>
                <IconBox><CondFormatIcon /></IconBox>
                Conditional
                <ChevLine>Formatting <Chev s={7} /></ChevLine>
              </LargeButton>
              <LargeButton $w={60} $pt={10}>
                <IconBox><TableIcon /></IconBox>
                Format as
                <ChevLine>Table <Chev s={7} /></ChevLine>
              </LargeButton>
              <LargeButton $w={42} $pt={10}>
                <IconBox><CellStylesIcon /></IconBox>
                Cell
                <ChevLine>Styles <Chev s={7} /></ChevLine>
              </LargeButton>
            </GroupBody>
            <GroupFooter><FooterLabel>Styles</FooterLabel></GroupFooter>
          </Group>

          <Group $w={142}>
            <GroupBody $pl={7}>
              <LargeButton $w={42} $pt={9}>
                <IconBox $h={33}><InsertCellsIcon /></IconBox>
                Insert
                <ChevLine><Chev /></ChevLine>
              </LargeButton>
              <LargeButton $w={42} $pt={9}>
                <IconBox $h={33}><DeleteCellsIcon /></IconBox>
                Delete
                <ChevLine><Chev /></ChevLine>
              </LargeButton>
              <LargeButton $w={44} $pt={6}>
                <IconBox $h={35}><FormatCellsIcon /></IconBox>
                Format
                <ChevLine><Chev /></ChevLine>
              </LargeButton>
            </GroupBody>
            <GroupFooter><FooterLabel>Cells</FooterLabel></GroupFooter>
          </Group>

          <Group $w={202}>
            <GroupBody $pl={11}>
              <Stack $w={91} style={{ paddingTop: 3 }}>
                <SmallAction $gap={4}><Slot $w={16} $size={18}>Σ</Slot>AutoSum<Slot $w={24}><Chev /></Slot></SmallAction>
                <SmallAction $gap={4}><Slot $w={16}><FillDownIcon /></Slot>Fill<Chev /></SmallAction>
                <SmallAction $gap={4}><Slot $w={16}><EraserIcon /></Slot>Clear<Chev /></SmallAction>
              </Stack>
              <LargeButton $w={46} $pt={7}>
                <IconBox $h={33}><SortIcon /></IconBox>
                Sort &amp;
                <ChevLine>Filter <Chev s={7} /></ChevLine>
              </LargeButton>
              <LargeButton $w={46} $pt={7}>
                <IconBox $h={33}><FindIcon /></IconBox>
                Find &amp;
                <ChevLine>Select <Chev s={7} /></ChevLine>
              </LargeButton>
            </GroupBody>
            <GroupFooter><FooterLabel>Editing</FooterLabel></GroupFooter>
          </Group>

          <Group $w={60} $noLine>
            <GroupBody>
              <LargeButton $w={58} $pt={8}>
                <IconBox $h={33}><AddInsIcon /></IconBox>
                Add-ins
              </LargeButton>
            </GroupBody>
            <GroupFooter><FooterLabel>Add-ins</FooterLabel></GroupFooter>
          </Group>
        </Ribbon>

        <FormulaBar>
          <NameBox>L14<Chev s={10} /></NameBox>
          <Kebab>
            <svg width="3" height="11" viewBox="0 0 3 11" fill="#555"><circle cx="1.500" cy="1.500" r="1.200" /><circle cx="1.500" cy="5.500" r="1.200" /><circle cx="1.500" cy="9.500" r="1.200" /></svg>
          </Kebab>
          <FxBox>
            <svg width="12" height="12" viewBox="0 0 12 12" fill="none" stroke="#bbb"><path d="M1 1l10 10M11 1 1 11" /></svg>
            <svg width="14" height="12" viewBox="0 0 14 12" fill="none" stroke="#bbb"><path d="M1 6l4 5 8-10" /></svg>
            <FxLabel>fx</FxLabel>
          </FxBox>
          <FormulaInput>Maximum legal liability; Fine of R3 million or higher</FormulaInput>
        </FormulaBar>

        <Sheet>
          <SheetRow $h={22}>
            <ColHead />
            <ColHead />
            <ColHead>G</ColHead>
            <ColHead>H</ColHead>
            <ColHead>I</ColHead>
            <ColHead>J</ColHead>
            <ColHead>K</ColHead>
            <ColHead $selected>L</ColHead>
          </SheetRow>
          {ratingRows.map((row) => <DataRow key={row.n} row={row} />)}
          <EmptyRow n={19} h={23} />
          <EmptyRow n={20} h={34} />
          <SheetRow $h={35} $topRule>
            <RowHead>21</RowHead>
            <BlankCells />
            <Header>Impact</Header>
            <Header>Rating</Header>
            <Header>Impact on the Data Subject</Header>
            <Header>Number of Data Subjects Affected</Header>
          </SheetRow>
          {subjectRows.map((row) => <DataRow key={row.n} row={row} second />)}
          <EmptyRow n="" h={22} />
        </Sheet>

        <TabsBar>
          <NavSlot $w={32} $color="#aaa">
            <svg width="8" height="12" viewBox="0 0 8 12" fill="none" stroke="#999"><path d="M6.500 1 1.500 6l5 5" /></svg>
          </NavSlot>
          <NavSlot $w={56}>
            <svg width="8" height="12" viewBox="0 0 8 12" fill="none" stroke="#444"><path d="M1.500 1l5 5-5 5" /></svg>
          </NavSlot>
          <SheetTab $w={75} $mr={27}>Introduction</SheetTab>
          <SheetTab $w={44} $mr={18}>Charter</SheetTab>
          <SheetTab $w={92} $mr={20} $bg="#fff" $color="#222" $active $radius={2}><TabText $active>Risk Method</TabText></SheetTab>
          <SheetTab $w={72} $mr={17}>Penalty calc</SheetTab>
          <SheetTab $w={87} $mr={9} $bg="#8fd3df">Legislations</SheetTab>
          <SheetTab $w={88} $mr={8} $bg="#ffd27d">Monitoring</SheetTab>
          <SheetTab $w={53} $mr={10} $bg="#ffff00">CRMP</SheetTab>
          <SheetTab $w={90} $bg="#3f8cf0" $color="#dfeaff" style={{ justifyContent: "flex-start", paddingLeft: 9, borderRadius: "3px 0 0 3px" }}>Risk Treatment</SheetTab>
          <TabTool $w={32}>
            <svg width="12" height="4" viewBox="0 0 12 4" fill="#444"><circle cx="2" cy="2" r="1.500" /><circle cx="6" cy="2" r="1.500" /><circle cx="10" cy="2" r="1.500" /></svg>
          </TabTool>
          <TabTool $w={30}>+</TabTool>
          <TabTool $w={32}>
            <svg width="3" height="11" viewBox="0 0 3 11" fill="#555"><circle cx="1.500" cy="1.500" r="1.200" /><circle cx="1.500" cy="5.500" r="1.200" /><circle cx="1.500" cy="9.500" r="1.200" /></svg>
          </TabTool>
          <ScrollTrack>
            <svg width="6" height="9" viewBox="0 0 6 9" fill="#555"><path d="M5.500 0v9L0 4.500z" /></svg>
            <ScrollThumb />
          </ScrollTrack>
        </TabsBar>

        <StatusBar>
          <span>Ready</span>
          <span>Accessibility: Investigate</span>
          <StatusViews>
            <ViewButton $on><ViewGlyph kind="normal" /></ViewButton>
            <ViewButton><ViewGlyph kind="page" /></ViewButton>
            <ViewButton><ViewGlyph kind="break" /></ViewButton>
          </StatusViews>
        </StatusBar>
      </Window>
    </Page>
  );
}
